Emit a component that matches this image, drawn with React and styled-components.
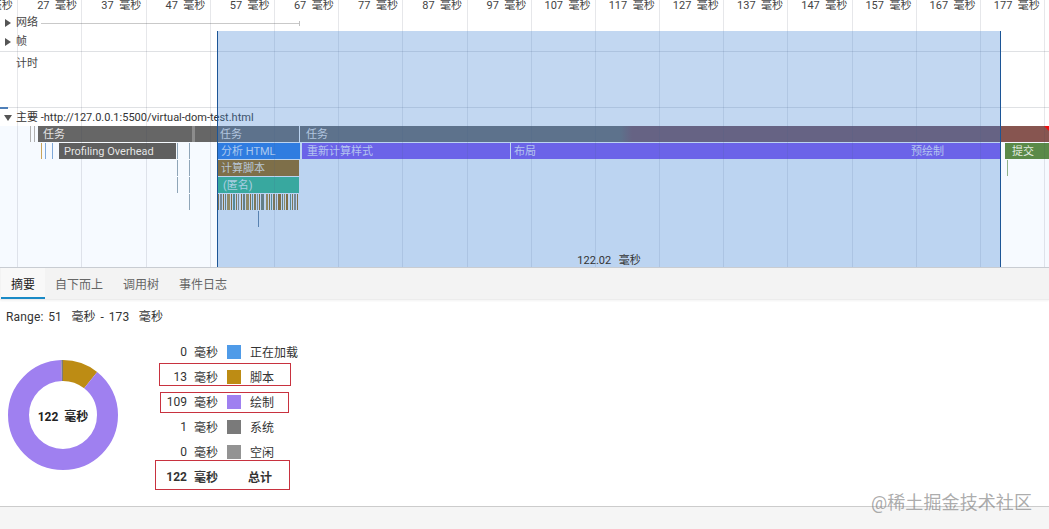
import React from 'react';
import styled, { createGlobalStyle } from 'styled-components';

const CJK = `Roboto, "Noto Sans CJK SC", sans-serif`;

const GlobalStyle = createGlobalStyle`
  html, body {
    margin: 0;
    padding: 0;
    background: #fff;
    overflow: hidden;
  }
  body {
    font-family: ${CJK};
    font-size: 12px;
    color: #333;
  }
`;

const Page = styled.div`
  position: relative;
  width: 1049px;
  height: 529px;
  display: flex;
  flex-direction: column;
  overflow: hidden;
`;

/* timeline */
const Timeline = styled.section`
  position: relative;
  height: 268px;
  flex: none;
  border-bottom: 1px solid #c8ccd2;
  box-sizing: border-box;
  overflow: hidden;
  display: flex;
  flex-direction: column;
`;

const GridLayer = styled.div`
  position: absolute;
  top: 0;
  bottom: 0;
  left: -46px;
  display: flex;
  pointer-events: none;
  z-index: 2;
`;

const GridCell = styled.div`
  width: 64.2px;
  flex: none;
  box-sizing: border-box;
  border-right: 1px solid rgba(60, 70, 90, 0.13);
`;

const Ruler = styled.div`
  height: 13px;
  flex: none;
  margin-left: -46.9px;
  display: flex;
  position: relative;
  z-index: 4;
`;

const RulerLabel = styled.div`
  width: 64.2px;
  flex: none;
  box-sizing: border-box;
  padding-right: 4.5px;
  text-align: right;
  font-size: 11px;
  line-height: 11px;
  white-space: pre;
  color: #444;
`;

const TrackRow = styled.div`
  position: relative;
  height: ${p => p.$height}px;
  flex: none;
  display: flex;
  align-items: ${p => (p.$top ? 'flex-start' : 'center')};
  padding: ${p => (p.$top ? 0 : 2)}px 0 0 5px;
  font-size: 11px;
  color: #444;
  border-bottom: ${p => (p.$line ? '1px solid #dfe1e4' : 'none')};
  box-sizing: border-box;
`;

const Caret = styled.span`
  width: 0;
  height: 0;
  margin-right: 5px;
  border-style: solid;
  border-width: 4px 0 4px 6px;
  border-color: transparent transparent transparent #555;
`;

const CaretDown = styled.span`
  width: 0;
  height: 0;
  margin-left: -1px;
  margin-right: 4px;
  border-style: solid;
  border-width: 6px 4px 0 4px;
  border-color: #555 transparent transparent transparent;
`;

const TrackName = styled.span`
  margin-left: ${p => p.$indent || 0}px;
  margin-top: ${p => p.$drop || 0}px;
  line-height: 16px;
  white-space: nowrap;
`;

const NetworkLine = styled.div`
  margin-left: 3px;
  width: 258px;
  height: 1px;
  margin-top: 1px;
  background: #c9c9c9;
  position: relative;
  &::after {
    content: '';
    position: absolute;
    right: -1px;
    top: -2px;
    width: 1px;
    height: 5px;
    background: #c0c0c0;
  }
`;

const MainSection = styled.div`
  flex: 1;
  background: #f6faff;
  position: relative;
  display: flex;
  flex-direction: column;
`;

const MainHeader = styled.div`
  height: 18px;
  flex: none;
  display: flex;
  align-items: center;
  box-sizing: border-box;
  padding: 2px 0 0 5px;
  font-size: 11px;
  color: #333;
  background: #fff;
  position: relative;
  &::before {
    content: '';
    position: absolute;
    left: 0;
    top: -1px;
    width: 8px;
    height: 2px;
    background: #4f7fb8;
  }
`;

const Flame = styled.div`
  position: relative;
  flex: 1;
`;

const Bar = styled.div`
  position: absolute;
  left: ${p => p.$x}px;
  width: ${p => p.$w}px;
  top: ${p => p.$row * 17}px;
  height: 16px;
  box-sizing: border-box;
  padding-left: ${p => p.$pad ?? 5}px;
  background: ${p => p.$bg};
  color: rgba(255, 255, 255, 0.85);
  font-size: 11px;
  line-height: 18px;
  white-space: nowrap;
  overflow: hidden;
`;

const Tick = styled.div`
  position: absolute;
  left: ${p => p.$x}px;
  top: ${p => p.$y}px;
  height: ${p => p.$h}px;
  width: 1px;
  background: ${p => p.$color || '#8fa5b8'};
`;

const RedCorner = styled.div`
  position: absolute;
  right: 0;
  top: 0;
  width: 0;
  height: 0;
  border-top: 5px solid #f01010;
  border-left: 5px solid transparent;
`;

const Barcode = styled.svg`
  position: absolute;
  left: 218px;
  top: 68px;
`;

const Selection = styled.div`
  position: absolute;
  left: 217px;
  width: 784px;
  top: 31px;
  bottom: 0;
  box-sizing: border-box;
  border-left: 1px solid #1c5596;
  border-right: 1px solid #1c5596;
  background: rgba(75, 138, 215, 0.34);
  z-index: 3;
  display: flex;
  align-items: flex-end;
  justify-content: center;
`;

const SelectionLabel = styled.div`
  font-size: 11px;
  line-height: 13px;
  white-space: pre;
  word-spacing: 1px;
  color: #333;
`;

/* tabs */
const TabBar = styled.nav`
  height: 32px;
  flex: none;
  display: flex;
  align-items: stretch;
  background: #f3f3f3;
  padding-left: 1px;
  border-bottom: 1px solid #ececec;
  box-sizing: border-box;
  box-shadow: 0 1px 2px rgba(0, 0, 0, 0.05);
`;

const Tab = styled.div`
  padding: 1px 10px 0;
  display: flex;
  align-items: center;
  font-size: 12px;
  color: ${p => (p.$active ? '#222' : '#666')};
  border-bottom: 2px solid ${p => (p.$active ? '#1a8ac6' : 'transparent')};
  background: ${p => (p.$active ? '#f8f8f8' : 'transparent')};
`;

/* summary */
const Summary = styled.section`
  flex: 1;
  position: relative;
  padding: 9px 0 0 6px;
  min-height: 0;
`;

const RangeText = styled.div`
  font-size: 12px;
  line-height: 17px;
  white-space: pre;
  word-spacing: 1.6px;
  letter-spacing: 0.15px;
  color: #333;
`;

const SummaryBody = styled.div`
  display: flex;
  margin-top: 13px;
  align-items: flex-start;
`;

const Donut = styled.div`
  position: relative;
  width: 110px;
  height: 110px;
  margin: 21px 0 0 2px;
  flex: none;
`;

const DonutValue = styled.div`
  position: absolute;
  inset: 0;
  display: flex;
  align-items: center;
  justify-content: center;
  font-size: 12px;
  font-weight: 700;
  white-space: pre;
  color: #222;
`;

const Legend = styled.div`
  margin-left: 42px;
  display: flex;
  flex-direction: column;
`;

const LegendRow = styled.div`
  height: 25px;
  display: flex;
  align-items: center;
  font-size: 12px;
  color: #333;
  font-weight: ${p => (p.$bold ? 700 : 400)};
`;

const LegendValue = styled.span`
  width: 27px;
  text-align: right;
`;

const LegendUnit = styled.span`
  width: 24px;
  margin-left: 7px;
`;

const Swatch = styled.span`
  width: 14px;
  height: 14px;
  margin-left: 9px;
  background: ${p => p.$color || 'transparent'};
`;

const LegendLabel = styled.span`
  margin-left: ${p => (p.$bold ? 7 : 9)}px;
`;

const Annotation = styled.div`
  position: absolute;
  left: ${p => p.$x}px;
  top: ${p => p.$y}px;
  width: ${p => p.$w}px;
  height: ${p => p.$h}px;
  box-sizing: border-box;
  border: 1px solid #c8323f;
  pointer-events: none;
`;

const Footer = styled.div`
  height: 23px;
  flex: none;
  background: #f5f5f5;
  border-top: 1px solid #ccc;
  box-sizing: border-box;
`;

const Watermark = styled.div`
  position: absolute;
  left: 871px;
  top: 491px;
  font-size: 18px;
  line-height: 24px;
  letter-spacing: 0.1px;
  white-space: nowrap;
  color: rgba(125, 125, 125, 0.65);
`;

const rulerMarks = Array.from({ length: 17 }, (_, i) => 17 + i * 10);

const barcodeColors = ['#98701a', '#8a8a7a', '#986100', '#6f7a60', '#b08a30', '#986100', '#5a8a78'];
const barcodeWidths = [1, 2, 1, 1, 3, 1, 2, 1, 1, 1, 2, 3, 1, 1, 2, 1, 1, 3, 2, 1, 1, 2, 1, 3, 1, 1, 2, 1];

// thin call marks left of the selection, one segment per flame row
const stackTicks = [
  { x: 177, rows: [1, 2, 3] },
  { x: 189, rows: [1, 2, 3, 4] },
];

function BarcodeStrip() {
  let x = 0;
  const rects = [];
  let i = 0;
  while (x < 80) {
    const w = barcodeWidths[i % barcodeWidths.length];
    rects.push(<rect key={i} x={x} y="0" width={w} height="16" fill={barcodeColors[i % barcodeColors.length]} />);
    x += w + 1 + (i % 9 === 8 ? 1 : 0);
    i += 1;
  }
  return <Barcode width="81" height="16">{rects}</Barcode>;
}

function DonutChart() {
  const r = 44.5;
  const c = 2 * Math.PI * r;
  const parts = [
    { value: 13, color: '#bd8c14' },
    { value: 108.2, color: '#9f80f0' },
    { value: 0.8, color: '#7a7a7a' },
  ];
  let offset = 0;
  return (
    <svg width="110" height="110" viewBox="0 0 110 110">
      <g transform="rotate(-90 55 55)">
        {parts.map(part => {
          const len = (part.value / 122) * c;
          const el = (
            <circle
              key={part.color}
              cx="55"
              cy="55"
              r={r}
              fill="none"
              stroke={part.color}
              strokeWidth="21"
              strokeDasharray={`${len} ${c - len}`}
              strokeDashoffset={-offset}
            />
          );
          offset += len;
          return el;
        })}
      </g>
    </svg>
  );
}

const legendRows = [
  { value: 0, color: '#4f9be8', label: '正在加载' },
  { value: 13, color: '#bd8c14', label: '脚本' },
  { value: 109, color: '#9f80f0', label: '绘制' },
  { value: 1, color: '#7a7a7a', label: '系统' },
  { value: 0, color: '#939393', label: '空闲' },
];

export default function App() {
  return (
    <Page>
      <GlobalStyle />
      <Timeline>
        <GridLayer>
          {rulerMarks.map(m => <GridCell key={m} />)}
        </GridLayer>
        <Ruler>
          {rulerMarks.map(m => <RulerLabel key={m}>{m}  毫秒</RulerLabel>)}
        </Ruler>
        <TrackRow $height={18}>
          <Caret />
          <TrackName>网络</TrackName>
          <NetworkLine />
        </TrackRow>
        <TrackRow $height={21} $line>
          <Caret />
          <TrackName>帧</TrackName>
        </TrackRow>
        <TrackRow $height={56} $top $line>
          <TrackName $indent={11} $drop={4}>计时</TrackName>
        </TrackRow>
        <MainSection>
          <MainHeader>
            <CaretDown />
            <TrackName>主要 -http://127.0.0.1:5500/virtual-dom-test.html</TrackName>
          </MainHeader>
          <Flame>
            <Tick $x={30} $y={0} $h={16} $color="#b0b0b0" />
            <Tick $x={34} $y={0} $h={16} $color="#b0b0b0" />
            <Bar $x={38} $w={155} $row={0} $bg="#666">任务</Bar>
            <Bar $x={192} $w={3} $row={0} $bg="#8c8c8c" />
            <Bar $x={195} $w={22} $row={0} $bg="#666" />
            <Bar $x={217} $w={82} $row={0} $pad={3} $bg="#666">任务</Bar>
            <Bar $x={300} $w={701} $row={0} $pad={6} $bg="linear-gradient(90deg, #666 320px, #74505a 332px)">任务</Bar>
            <Bar $x={1001} $w={48} $row={0} $bg="#875550" />
            <RedCorner />
            <Tick $x={41} $y={17} $h={16} $color="#c9a45a" />
            <Tick $x={45} $y={17} $h={16} $color="#7fa8d8" />
            <Tick $x={52} $y={17} $h={16} $color="#7fa8d8" />
            <Bar $x={59} $w={117} $row={1} $bg="#5f5f5f">Profiling Overhead</Bar>
            {stackTicks.map(t => t.rows.map(row => (
              <Tick key={`${t.x}-${row}`} $x={t.x} $y={row * 17} $h={16} />
            )))}
            <Bar $x={217} $w={83} $row={1} $pad={4} $bg="#2075e5">分析 HTML</Bar>
            <Bar $x={302} $w={208} $row={1} $bg="#7b50f1">重新计算样式</Bar>
            <Bar $x={511} $w={396} $row={1} $pad={3} $bg="#7b50f1">布局</Bar>
            <Bar $x={907} $w={94} $row={1} $pad={4} $bg="#7b50f1">预绘制</Bar>
            <Bar $x={1005} $w={44} $row={1} $pad={7} $bg="#5a8a48">提交</Bar>
            <Tick $x={1007} $y={34} $h={16} $color="#8fb38a" />
            <Bar $x={218} $w={81} $row={2} $pad={3} $bg="#986100">计算脚本</Bar>
            <Bar $x={218} $w={81} $row={3} $pad={5} $bg="#2eb883">(匿名)</Bar>
            <BarcodeStrip />
            <Tick $x={258} $y={85} $h={16} $color="#5f7f9f" />
          </Flame>
        </MainSection>
        <Selection>
          <SelectionLabel>122.02  毫秒</SelectionLabel>
        </Selection>
      </Timeline>
      <TabBar>
        <Tab $active>摘要</Tab>
        <Tab>自下而上</Tab>
        <Tab>调用树</Tab>
        <Tab>事件日志</Tab>
      </TabBar>
      <Summary>
        <RangeText>Range: 51  毫秒 - 173  毫秒</RangeText>
        <SummaryBody>
          <Donut>
            <DonutChart />
            <DonutValue>122  毫秒</DonutValue>
          </Donut>
          <Legend>
            {legendRows.map(row => (
              <LegendRow key={row.label}>
                <LegendValue>{row.value}</LegendValue>
                <LegendUnit>毫秒</LegendUnit>
                <Swatch $color={row.color} />
                <LegendLabel>{row.label}</LegendLabel>
              </LegendRow>
            ))}
            <LegendRow $bold>
              <LegendValue>122</LegendValue>
              <LegendUnit>毫秒</LegendUnit>
              <Swatch />
              <LegendLabel $bold>总计</LegendLabel>
            </LegendRow>
          </Legend>
        </SummaryBody>
        <Annotation $x={159} $y={63} $w={132} $h={23} />
        <Annotation $x={160} $y={92} $w={129} $h={21} />
        <Annotation $x={155} $y={160} $w={135} $h={30} />
      </Summary>
      <Footer />
      <Watermark>@稀土掘金技术社区</Watermark>
    </Page>
  );
}
